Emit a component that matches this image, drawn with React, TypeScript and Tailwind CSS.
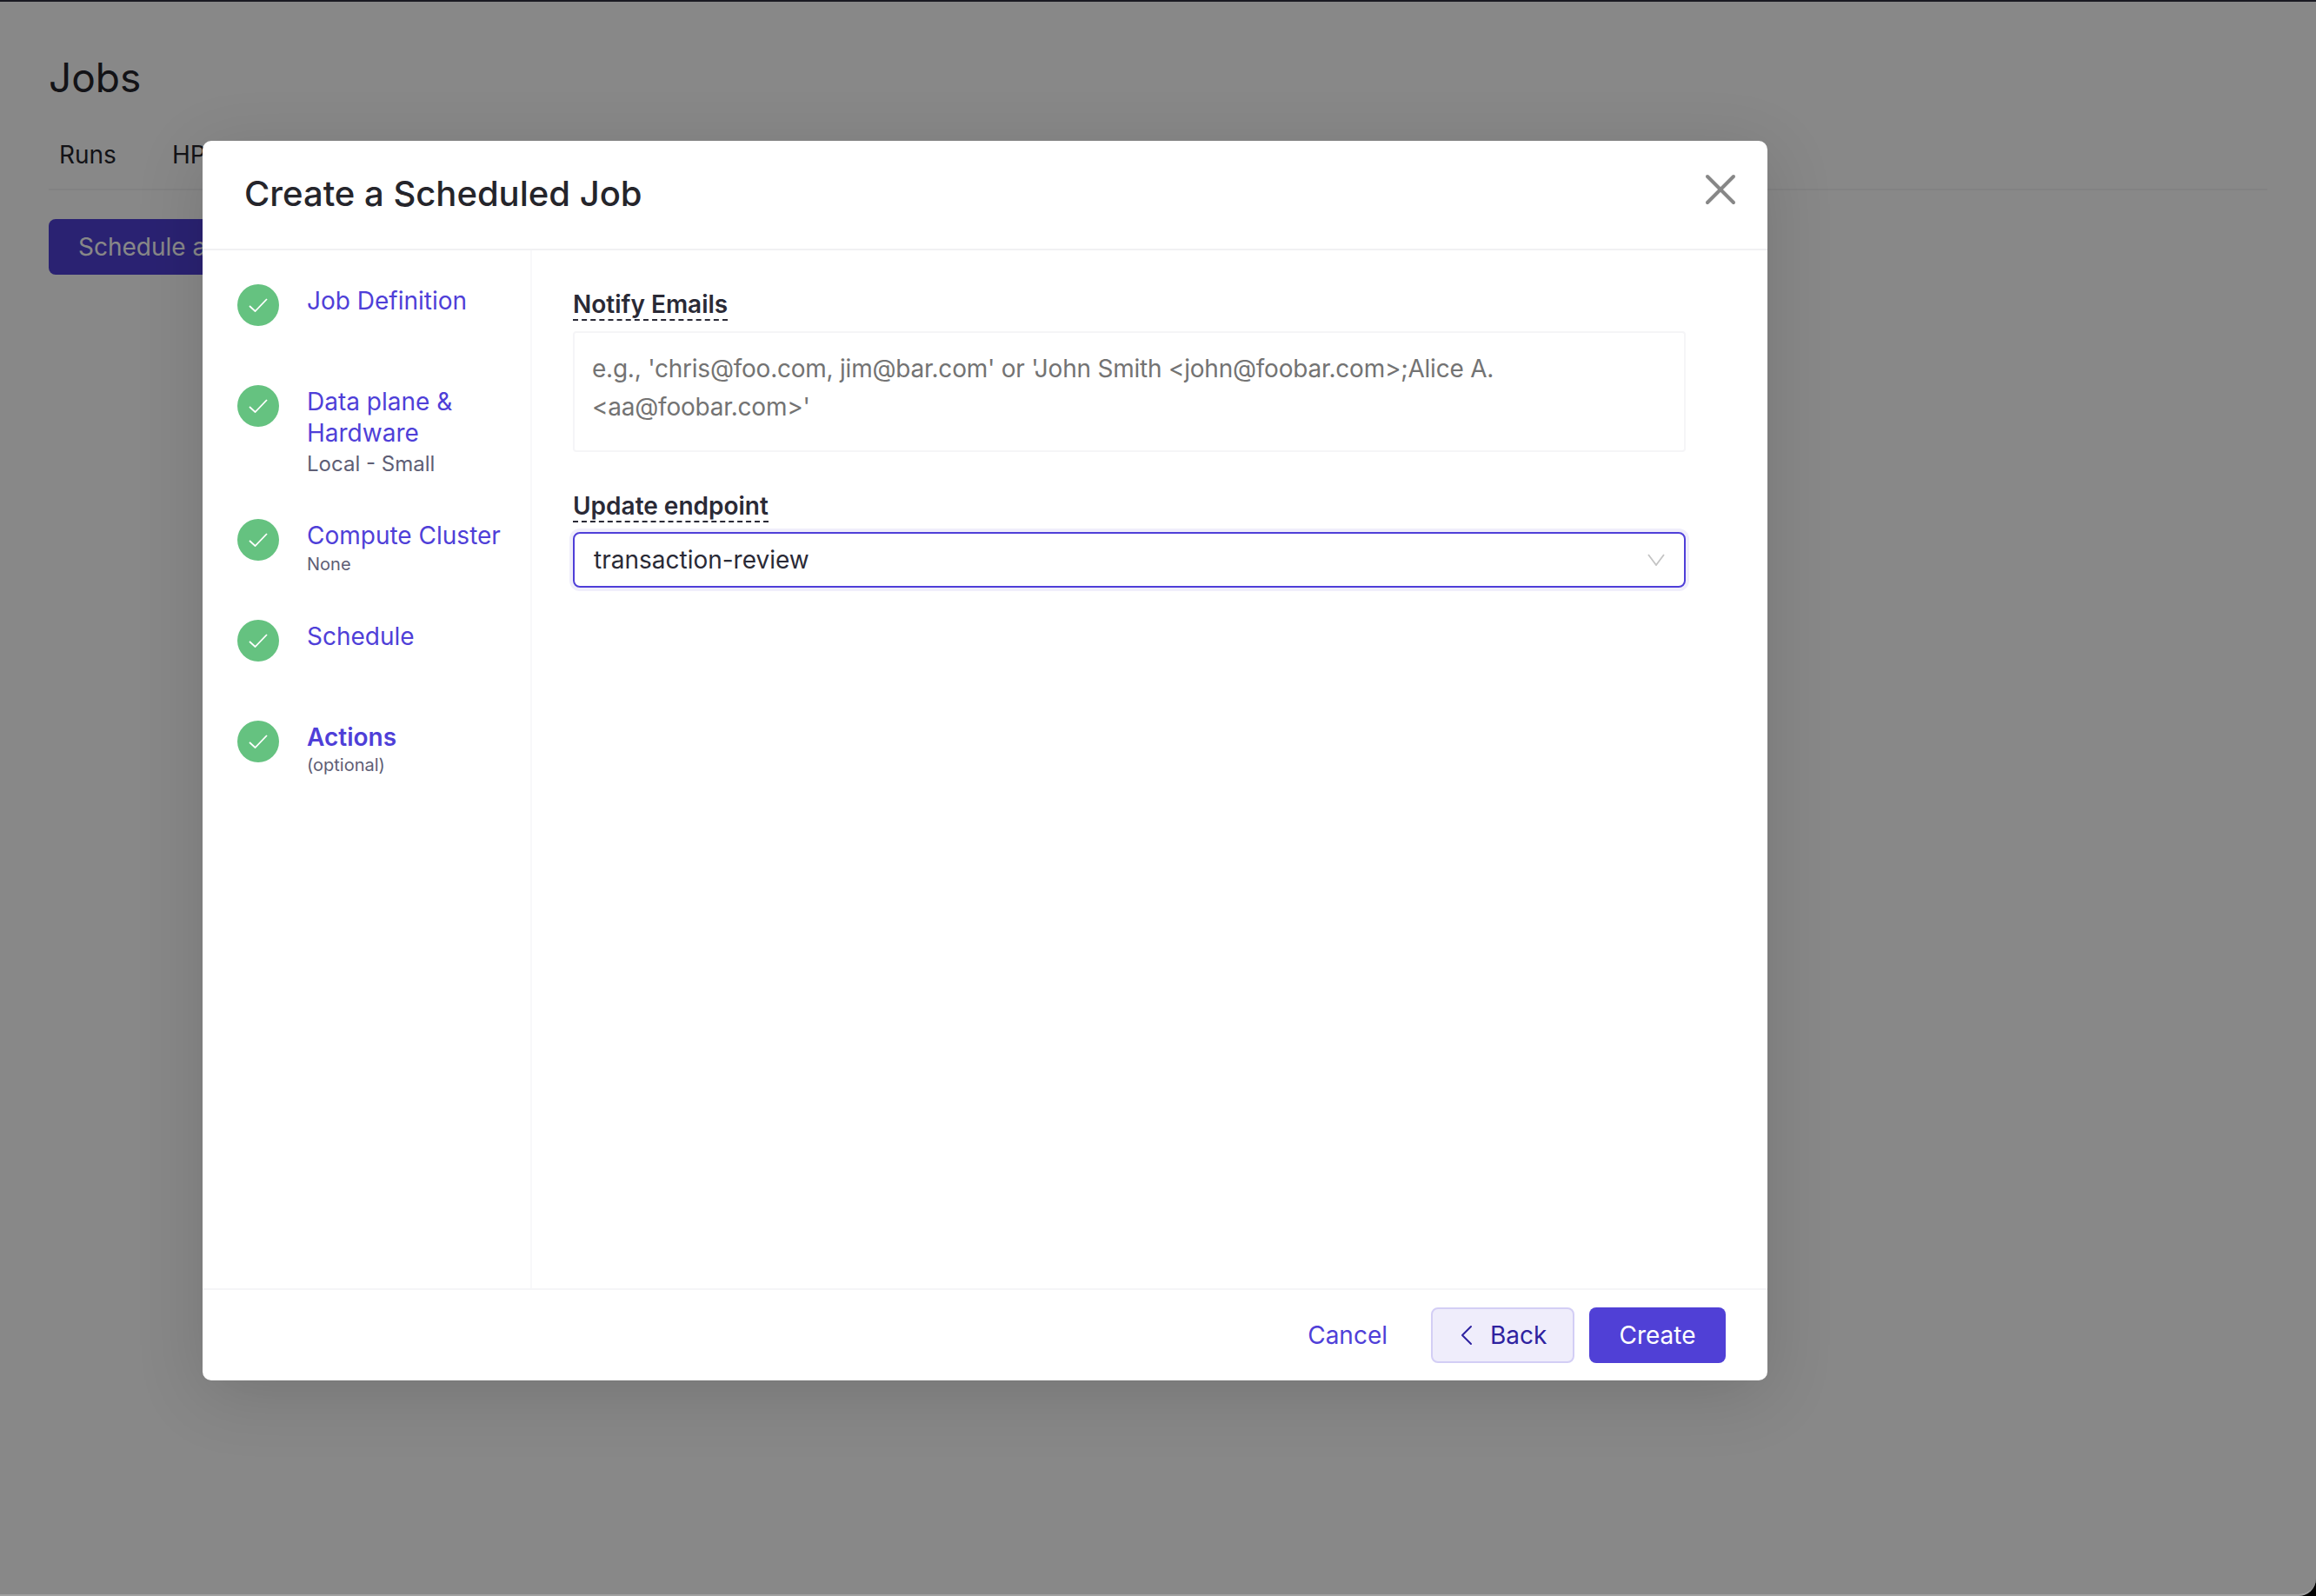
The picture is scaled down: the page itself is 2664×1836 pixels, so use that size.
import { ChevronLeft, X } from "lucide-react";

const steps = [
    { title: "Job Definition" },
    { title: "Data plane & Hardware", sub: "Local - Small", subClass: "mt-[4px] text-[24px] leading-[27px]" },
    { title: "Compute Cluster", sub: "None", subClass: "mt-[1px] text-[20px] leading-[28px]" },
    { title: "Schedule" },
    { title: "Actions", sub: "(optional)", subClass: "text-[20px] leading-[28px]", active: true },
];

function CheckCircle() {
    return (
        <div className="w-12 h-12 shrink-0 rounded-full bg-[#65c280] flex items-center justify-center">
            <svg width="22" height="16" viewBox="0 0 22 16" fill="none">
                <path d="M1 9L7.5 15L21 1" stroke="white" strokeWidth="1.8" />
            </svg>
        </div>
    );
}

function FieldLabel({ text }: { text: string }) {
    return (
        <div className="flex">
            <span className="text-[28px] leading-[34px] font-semibold text-[#2a2a36] border-b-2 border-dashed border-[#2a2a36]">
                {text}
            </span>
        </div>
    );
}

function Modal() {
    return (
        <div className="absolute left-[233px] top-[160px] w-[1800px] h-[1426px] bg-white rounded-[10px] flex flex-col shadow-[0_16px_80px_rgba(0,0,0,0.14)]">
            {/* Header */}
            <div className="h-[126px] shrink-0 border-b-2 border-[#f1f1f3] pl-[48px] pr-[24px] flex justify-between">
                <h2 className="mt-[37px] text-[40px] leading-[48px] font-medium text-[#25252b]">Create a Scheduled Job</h2>
                <X size={60} strokeWidth={1.6} className="mt-[26px] text-[#878787]" />
            </div>

            {/* Body */}
            <div className="flex-1 flex min-h-0">
                <div className="w-[379px] shrink-0 border-r-2 border-[#f8f8fa] pl-[40px] pt-[39px]">
                    {steps.map((step) => (
                        <div key={step.title} className="flex gap-[32px] min-h-[116px] pb-[50px]">
                            <CheckCircle />
                            <div className="mt-[1px]">
                                <div className={`text-[28px] leading-[36px] text-[#4f3fd8] ${step.active ? "font-semibold" : ""}`}>
                                    {step.title}
                                </div>
                                {step.sub && <div className={`text-[#5e5e75] ${step.subClass}`}>{step.sub}</div>}
                            </div>
                        </div>
                    ))}
                </div>

                <div className="flex-1 pl-[47px] pr-[94px] pt-[45px]">
                    <FieldLabel text="Notify Emails" />
                    <textarea
                        readOnly
                        className="block mt-[12px] w-full h-[139px] border-2 border-[#f5f5f7] rounded-[4px] px-[20px] py-[19px] text-[28px] leading-[44px] tracking-[-0.23px] resize-none outline-none placeholder:text-[#737373]"
                        placeholder="e.g., 'chris@foo.com, jim@bar.com' or 'John Smith <john@foobar.com>;Alice A. <aa@foobar.com>'"
                    />
                    <div className="mt-[45px]">
                        <FieldLabel text="Update endpoint" />
                    </div>
                    <div className="mt-[11px] h-[64px] border-2 border-[#4f3fd8] rounded-[8px] pl-[22px] pr-[22px] flex items-center justify-between text-[28px] text-[#2a2a36] shadow-[0_0_0_4px_#f0eefb]">
                        <span>transaction-review</span>
                        <svg width="20" height="14" viewBox="0 0 20 14" fill="none">
                            <path d="M1 1L10 13L19 1" stroke="#c4c4c4" strokeWidth="1.8" />
                        </svg>
                    </div>
                </div>
            </div>

            {/* Footer */}
            <div className="h-[106px] shrink-0 border-t-2 border-[#f5f5f7] flex items-start justify-end pt-[20px] pr-[48px] text-[28px]">
                <button className="h-[64px] mr-[50px] text-[#4f3fd8]">Cancel</button>
                <button className="h-[64px] w-[165px] mr-[17px] border-2 border-[#d3cef5] bg-[#efedfb] rounded-[8px] text-[#2e22a0] flex items-center pl-[19px] gap-[7px]">
                    <ChevronLeft size={40} strokeWidth={1.2} />
                    <span>Back</span>
                </button>
                <button className="h-[64px] w-[157px] bg-[#5040d6] rounded-[8px] text-white">Create</button>
            </div>
        </div>
    );
}

export default function App() {
    return (
        <div className="w-[2664px] h-[1836px] bg-black overflow-hidden font-[Inter,sans-serif]">
            <div className="relative w-full h-full bg-white rounded-br-[20px] overflow-hidden border-t-2 border-b-2 border-t-[#1a1a22] border-b-[#a0a0a0]">
                {/* Page behind the dialog */}
                <div className="px-[56px] pt-[59px]">
                    <h1 className="text-[46px] leading-[56px] text-[#25252b]">Jobs</h1>
                    <div className="mt-[39px] h-[63px] border-b-2 border-[#f4f4f6] flex gap-[64px] pl-[12px] text-[28px] leading-[44px] text-[#25252b]">
                        <span>Runs</span>
                        <span>HPO</span>
                    </div>
                    <button className="mt-[33px] h-[64px] px-[34px] bg-[#5040d6] rounded-[8px] text-[28px] text-white">
                        Schedule a Job
                    </button>
                </div>

                {/* Backdrop */}
                <div className="absolute inset-0 bg-black/[0.465]" />
                <Modal />
            </div>
        </div>
    );
}
